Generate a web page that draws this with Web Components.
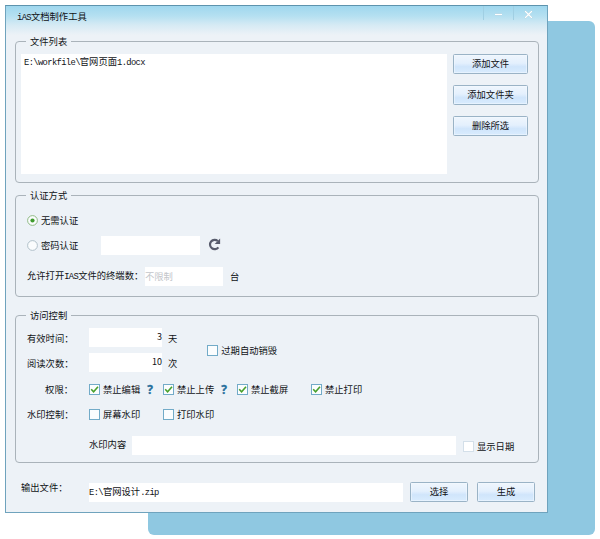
<!DOCTYPE html>
<html lang="zh-CN">
<head>
<meta charset="utf-8">
<title>iAS文档制作工具</title>
<style>
html,body{margin:0;height:100%;background:#fff;overflow:hidden}
body{font:9.3px/13px "Noto Sans CJK SC",sans-serif;color:#101216}
</style>
</head>
<body>
<ias-desktop></ias-desktop>
<script>
function define(name, html) {
  const t = document.createElement('template');
  t.innerHTML = html;
  customElements.define(name, class extends HTMLElement {
    constructor() {
      super();
      this.attachShadow({mode: 'open'}).appendChild(t.content.cloneNode(true));
    }
  });
}

define('ias-mono', `<style>
:host{font-family:"Liberation Mono",monospace;font-size:8.8px;letter-spacing:-.63px}
</style><slot></slot>`);

define('ias-button', `<style>
:host{display:flex;align-items:center;justify-content:center;box-sizing:border-box;width:75px;height:20px;padding-bottom:1px;border:1px solid #9ab3c6;border-radius:1.5px;
background:linear-gradient(#eff6fd,#e4f0fd 45%,#d0e5fb 65%,#d9ecfe);box-shadow:inset 0 0 0 1px #f4faff80}
</style><slot></slot>`);

define('ias-input', `<style>
:host{display:flex;align-items:center;box-sizing:border-box;height:19px;background:#fff;white-space:pre}
:host([end]){justify-content:flex-end;font-size:9px;padding-bottom:2px}
:host([hint]){color:#c3c6ca}
</style><span><slot></slot></span>`);

define('ias-group', `<style>
:host{display:block}
fieldset{box-sizing:border-box;height:100%;min-width:0;margin:0;padding:0;border:1px solid #aab3ba;border-radius:4px}
legend{margin-left:10px;padding:0 4px;height:13px;line-height:13px}
</style><fieldset><legend><slot name="legend"></slot></legend><slot></slot></fieldset>`);

define('ias-check', `<style>
:host{display:flex;align-items:center;gap:3px;white-space:nowrap}
.box{box-sizing:border-box;width:11px;height:11px;flex:none;border:1px solid #72abc8;background:#fbfdfe}
svg{display:none;width:9px;height:9px}
path{fill:none;stroke:#48a02c;stroke-width:1.6}
:host([checked]) svg{display:block}
:host([disabled]) .box{border-color:#d3dfe9;background:#fff}
</style><span class="box"><svg viewBox="1 1 9 9"><path d="M2.2 5.2 4.6 7.8 9 2.8"/></svg></span><slot></slot>`);

define('ias-radio', `<style>
:host{display:flex;align-items:center;gap:3px;white-space:nowrap}
svg{width:11px;height:11px;flex:none}
.ring{fill:#fafcfd;stroke:#a9bac4;stroke-width:.9}
.dot{display:none;fill:#3f9b2c}
:host([checked]) .dot{display:block}
:host([checked]) .ring{stroke:#86b378}
</style><svg viewBox="0 0 11 11"><circle class="ring" cx="5.5" cy="5.5" r="4.9"/><circle class="dot" cx="5.5" cy="5.5" r="2.1"/></svg><slot></slot>`);

define('ias-help', `<style>
:host{display:block;width:8px;font:bold 12px/13px "Open Sans","Noto Sans",sans-serif;color:#276f9c;text-align:center;-webkit-text-stroke:.3px}
</style>?`);

define('ias-refresh', `<style>
:host{display:block;width:13px;height:13px}svg{display:block}
</style><svg width="13" height="13" viewBox="0 0 12 12"><path d="M9.6 8.6A4.3 4.3 0 1 1 9 2.8" fill="none" stroke="#575b6c" stroke-width="2"/><path d="M11.2.5V5.5H6.2Z" fill="#575b6c"/></svg>`);

define('ias-titlebar', `<style>
:host{display:flex;height:29px;padding-left:11px;background:linear-gradient(#9fd7ee,#b5e0f1 35%,#d5eaf4 65%,#edf2f7)}
.t{flex:1;line-height:20px}
.b{width:30px;height:14px;box-sizing:border-box;border-left:1px solid #a0cfe3;display:flex;justify-content:center;padding-top:3px}
.b:last-child{width:34px;padding-right:5px}
svg{width:11px;height:11px;fill:none;stroke:#fff;stroke-width:1.7;overflow:visible;filter:drop-shadow(0 0 .5px #5f9fb9)}
</style><div class="t"><slot></slot></div>
<div class="b"><svg viewBox="0 0 11 11"><path d="M2 5.5H9"/></svg></div>
<div class="b"><svg viewBox="0 0 11 11"><path d="M2 2 9 9M9 2 2 9"/></svg></div>`);

define('ias-files', `<style>
:host{display:block}
.row{display:flex;padding:6px 0 0 5px;gap:6px}
.list{box-sizing:border-box;width:426px;height:120px;background:#fff;padding:1px 3px;white-space:pre}
.btns{display:flex;flex-direction:column;gap:11px}
</style><ias-group style="height:148px"><span slot="legend">文件列表</span>
<div class="row"><div class="list"><ias-mono>E:\\workfile\\</ias-mono>官网页面<ias-mono>1.docx</ias-mono></div>
<div class="btns"><ias-button>添加文件</ias-button><ias-button>添加文件夹</ias-button><ias-button>删除所选</ias-button></div></div></ias-group>`);

define('ias-auth', `<style>
:host{display:block}
.r{display:flex;align-items:center;height:19px}
.box{padding-left:11px}
</style><ias-group style="height:108px"><span slot="legend">认证方式</span><div class="box">
<div class="r" style="margin-top:9px"><ias-radio checked>无需认证</ias-radio></div>
<div class="r" style="margin-top:6px"><ias-radio style="width:74px">密码认证</ias-radio><ias-input style="width:99px"></ias-input><ias-refresh style="margin:-2px 0 0 8px"></ias-refresh></div>
<div class="r" style="margin-top:12px"><span style="width:118px;white-space:nowrap">允许打开<ias-mono>IAS</ias-mono>文件的终端数：</span><ias-input hint style="width:78px">不限制</ias-input><span style="margin-left:7px">台</span></div>
</div></ias-group>`);

define('ias-access', `<style>
:host{display:block}
.r{display:flex;align-items:center;height:19px}
.l{width:46px;margin:1px 16px 0 0;text-align:right;white-space:nowrap}
.box{padding:6px 0 0 11px}
.times{display:flex;align-items:center;gap:30px}
.times>div{display:grid;gap:6px}
.u{margin:2px 0 0 6px}
ias-help{margin-left:6px}
.p{display:flex;align-items:center;width:74px}
</style><ias-group style="height:154px"><span slot="legend">访问控制</span><div class="box">
<div class="times"><div>
<div class="r"><span class="l">有效时间：</span><ias-input end style="width:73px">3</ias-input><span class="u">天</span></div>
<div class="r"><span class="l">阅读次数：</span><ias-input end style="width:73px">10</ias-input><span class="u">次</span></div>
</div><ias-check>过期自动销毁</ias-check></div>
<div class="r" style="margin-top:8px"><span class="l" style="margin-top:-1px">权限：</span><div class="p"><ias-check checked>禁止编辑</ias-check><ias-help></ias-help></div><div class="p"><ias-check checked>禁止上传</ias-check><ias-help></ias-help></div><div class="p"><ias-check checked>禁止截屏</ias-check></div><ias-check checked>禁止打印</ias-check></div>
<div class="r" style="margin-top:6px"><span class="l" style="margin-top:-1px">水印控制：</span><div class="p"><ias-check>屏幕水印</ias-check></div><ias-check>打印水印</ias-check></div>
<div class="r" style="margin-top:12px;padding-left:62px"><span style="width:43px;margin-top:-2px">水印内容</span><ias-input style="width:324px"></ias-input><ias-check disabled style="margin-left:7px;margin-top:1px">显示日期</ias-check></div>
</div></ias-group>`);

define('ias-output', `<style>
:host{display:flex;align-items:center;height:20px}
.l{width:68px;align-self:flex-start;line-height:11px}
ias-button{width:58px}
</style><span class="l">输出文件：</span><ias-input style="width:314px"><ias-mono>E:\\</ias-mono>官网设计<ias-mono>.zip</ias-mono></ias-input><ias-button style="margin-left:7px">选择</ias-button><ias-button style="margin-left:9px">生成</ias-button>`);

define('ias-window', `<style>
:host{display:flex;flex-direction:column;box-sizing:border-box;width:543px;height:508px;border:1px solid #6fa3bd;border-top-color:#5d93ad;background:#edf2f7}
ias-files,ias-auth,ias-access{width:524px;margin-left:9px}
ias-auth{margin-top:6px}
ias-access{margin-top:12px}
ias-output{margin:19px 0 0 15px}
</style><ias-titlebar><ias-mono>iAS</ias-mono>文档制作工具</ias-titlebar><ias-files></ias-files><ias-auth></ias-auth><ias-access></ias-access><ias-output></ias-output>`);

define('ias-desktop', `<style>
:host{display:block;position:relative;width:600px;height:539px}
.panel{position:absolute;left:148px;top:21px;width:447px;height:514px;border-radius:6px;background:#8fc8e1}
ias-window{position:absolute;left:5px;top:5px}
</style><div class="panel"></div><ias-window></ias-window>`);
</script>
</body>
</html>
